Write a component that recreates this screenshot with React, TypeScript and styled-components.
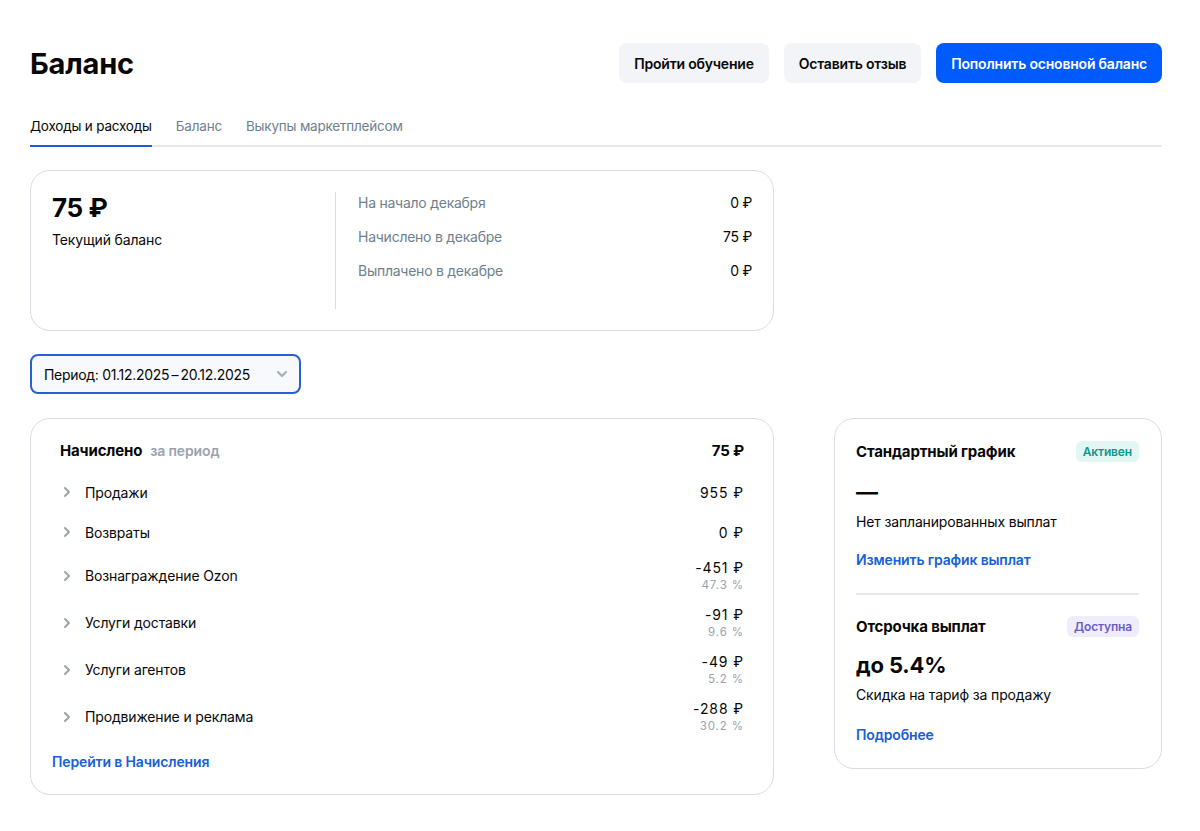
import React from 'react';
import styled, { createGlobalStyle } from 'styled-components';

const Colors = {
  text: '#070707',
  secondary: '#707f8d',
  muted: '#99a3ae',
  border: '#d9dde3',
  line: '#e6e8eb',
  blue: '#005bff',
  link: '#1760d6',
  btnGray: '#f2f4f7',
};

const GlobalStyle = createGlobalStyle`
  body {
    margin: 0;
    background: #fff;
    font-family: Inter, "Noto Sans", Arial, sans-serif;
    color: ${Colors.text};
    letter-spacing: -0.15px;
  }
  * { box-sizing: border-box; }
`;

const Page = styled.div`
  padding: 43px 38px 30px 30px;
  width: 1200px;
`;

const Header = styled.div`
  display: flex;
  align-items: center;
  justify-content: space-between;
`;

const Title = styled.h1`
  margin: 0;
  font-size: 29px;
  font-weight: 700;
  letter-spacing: -0.2px;
`;

const Actions = styled.div`
  display: flex;
  gap: 15px;
`;

const Button = styled.button<{ primary?: boolean }>`
  height: 40px;
  padding: 0 15px;
  border: none;
  border-radius: 8px;
  font-family: inherit;
  font-size: 14px;
  font-weight: 600;
  letter-spacing: -0.2px;
  background: ${({ primary }) => (primary ? Colors.blue : Colors.btnGray)};
  color: ${({ primary }) => (primary ? '#fff' : Colors.text)};
`;

const Tabs = styled.div`
  display: flex;
  gap: 24px;
  margin-top: 25px;
  border-bottom: 2px solid ${Colors.line};
`;

const Tab = styled.div<{ active?: boolean }>`
  padding: 9px 0 10px;
  margin-bottom: -2px;
  font-size: 13.5px;
  line-height: 18px;
  letter-spacing: -0.2px;
  color: ${({ active }) => (active ? Colors.text : Colors.secondary)};
  border-bottom: 2px solid ${({ active }) => (active ? '#1f5bd6' : 'transparent')};
`;

const Card = styled.div`
  border: 1px solid ${Colors.border};
  border-radius: 20px;
  background: #fff;
`;

const BalanceCard = styled(Card)`
  width: 744px;
  margin-top: 23px;
  display: flex;
  padding: 21px;
`;

const BalanceMain = styled.div`
  width: 283px;
`;

const BigAmount = styled.div`
  font-size: 26px;
  font-weight: 700;
  line-height: 32px;
  letter-spacing: -0.4px;
`;

const Caption = styled.div`
  font-size: 14px;
  line-height: 20px;
  margin-top: 6px;
`;

const VDivider = styled.div`
  width: 1px;
  height: 117px;
  background: ${Colors.border};
`;

const Summary = styled.div`
  flex: 1;
  padding-left: 22px;
  display: flex;
  flex-direction: column;
  gap: 12px;
`;

const SummaryRow = styled.div`
  display: flex;
  justify-content: space-between;
  font-size: 14px;
  line-height: 22px;
  letter-spacing: -0.25px;
`;

const SummaryLabel = styled.span`
  color: ${Colors.secondary};
`;

const PeriodSelect = styled.div`
  margin-top: 23px;
  width: 271px;
  height: 40px;
  border: 2px solid #2a5fd2;
  border-radius: 8px;
  background: #f7f9fc;
  display: flex;
  align-items: center;
  justify-content: space-between;
  padding: 0 10px 0 12px;
  font-size: 14px;
  letter-spacing: -0.3px;
`;

const Columns = styled.div`
  display: flex;
  justify-content: space-between;
  align-items: flex-start;
  margin-top: 24px;
`;

const AccrualCard = styled(Card)`
  width: 744px;
  padding: 21px 29px 22px 21px;
`;

const AccrualHeader = styled.div`
  display: flex;
  justify-content: space-between;
  align-items: center;
  padding-left: 8px;
  height: 20px;
  margin-bottom: 12px;
  font-size: 15px;
  font-weight: 700;
`;

const Muted = styled.span`
  color: ${Colors.muted};
  font-size: 14px;
  font-weight: 600;
  margin-left: 8px;
`;

const Row = styled.div`
  display: flex;
  align-items: center;
  justify-content: space-between;
  min-height: 40px;
  padding: 6px 0 6px 10px;
`;

const RowLabel = styled.div`
  display: flex;
  align-items: center;
  gap: 13px;
  font-size: 14px;
`;

const RowValue = styled.div`
  text-align: right;
  font-size: 14px;
  line-height: 19px;
  letter-spacing: 0.9px;
`;

const Percent = styled.div`
  font-size: 11.5px;
  line-height: 16px;
  color: ${Colors.muted};
  letter-spacing: 0.9px;
`;

const Link = styled.a<{ mt?: number }>`
  display: block;
  color: ${Colors.link};
  font-size: 14px;
  font-weight: 600;
  line-height: 20px;
  text-decoration: none;
  margin-top: ${({ mt }) => mt ?? 0}px;
`;

const ScheduleCard = styled(Card)`
  width: 328px;
  padding: 21px 22px 23px 21px;
`;

const ScheduleHead = styled.div<{ mt?: number }>`
  display: flex;
  justify-content: space-between;
  align-items: center;
  height: 22px;
  margin-top: ${({ mt }) => mt ?? 0}px;
  font-size: 15px;
  font-weight: 700;
`;

const Badge = styled.span<{ tone: 'teal' | 'purple' }>`
  padding: 3px 7px;
  border-radius: 6px;
  font-size: 12px;
  font-weight: 600;
  line-height: 15px;
  background: ${({ tone }) => (tone === 'teal' ? '#e2f6f3' : '#efedfb')};
  color: ${({ tone }) => (tone === 'teal' ? '#13958a' : '#6a5cc7')};
`;

const Big = styled.div<{ mt: number }>`
  margin-top: ${({ mt }) => mt}px;
  font-size: 22px;
  font-weight: 700;
  line-height: 28px;
`;

const Text = styled.div<{ mt: number }>`
  margin-top: ${({ mt }) => mt}px;
  font-size: 14px;
  line-height: 20px;
`;

const HDivider = styled.div`
  margin-top: 23px;
  height: 2px;
  background: ${Colors.line};
`;

const Chevron = () => (
  <svg width="10" height="12" viewBox="0 0 10 12" fill="none">
    <path d="M3 2l4 4-4 4" stroke={Colors.muted} strokeWidth="2" strokeLinecap="round" strokeLinejoin="round" />
  </svg>
);

const ChevronDown = () => (
  <svg width="14" height="10" viewBox="0 0 14 10" fill="none">
    <path d="M3 3l4 4 4-4" stroke="#a6aeb8" strokeWidth="2.2" strokeLinecap="round" strokeLinejoin="round" />
  </svg>
);

const accruals = [
  { label: 'Продажи', value: '955 ₽' },
  { label: 'Возвраты', value: '0 ₽' },
  { label: 'Вознаграждение Ozon', value: '-451 ₽', pct: '47.3 %' },
  { label: 'Услуги доставки', value: '-91 ₽', pct: '9.6 %' },
  { label: 'Услуги агентов', value: '-49 ₽', pct: '5.2 %' },
  { label: 'Продвижение и реклама', value: '-288 ₽', pct: '30.2 %' },
];

const summary = [
  ['На начало декабря', '0 ₽'],
  ['Начислено в декабре', '75 ₽'],
  ['Выплачено в декабре', '0 ₽'],
];

export default function App() {
  return (
    <Page>
      <GlobalStyle />
      <Header>
        <Title>Баланс</Title>
        <Actions>
          <Button>Пройти обучение</Button>
          <Button>Оставить отзыв</Button>
          <Button primary>Пополнить основной баланс</Button>
        </Actions>
      </Header>

      <Tabs>
        <Tab active>Доходы и расходы</Tab>
        <Tab>Баланс</Tab>
        <Tab>Выкупы маркетплейсом</Tab>
      </Tabs>

      <BalanceCard>
        <BalanceMain>
          <BigAmount>75 ₽</BigAmount>
          <Caption>Текущий баланс</Caption>
        </BalanceMain>
        <VDivider />
        <Summary>
          {summary.map(([label, value]) => (
            <SummaryRow key={label}>
              <SummaryLabel>{label}</SummaryLabel>
              <span>{value}</span>
            </SummaryRow>
          ))}
        </Summary>
      </BalanceCard>

      <PeriodSelect>
        <span>Период: 01.12.2025{'\u2009–\u2009'}20.12.2025</span>
        <ChevronDown />
      </PeriodSelect>

      <Columns>
        <AccrualCard>
          <AccrualHeader>
            <span>
              Начислено<Muted>за период</Muted>
            </span>
            <span>75 ₽</span>
          </AccrualHeader>
          {accruals.map((item) => (
            <Row key={item.label}>
              <RowLabel>
                <Chevron />
                {item.label}
              </RowLabel>
              <RowValue>
                {item.value}
                {item.pct && <Percent>{item.pct}</Percent>}
              </RowValue>
            </Row>
          ))}
          <Link mt={12}>Перейти в Начисления</Link>
        </AccrualCard>

        <ScheduleCard>
          <ScheduleHead>
            Стандартный график
            <Badge tone="teal">Активен</Badge>
          </ScheduleHead>
          <Big mt={16}>—</Big>
          <Text mt={6}>Нет запланированных выплат</Text>
          <Link mt={18}>Изменить график выплат</Link>
          <HDivider />
          <ScheduleHead mt={20}>
            Отсрочка выплат
            <Badge tone="purple">Доступна</Badge>
          </ScheduleHead>
          <Big mt={14}>до 5.4%</Big>
          <Text mt={6}>Скидка на тариф за продажу</Text>
          <Link mt={20}>Подробнее</Link>
        </ScheduleCard>
      </Columns>
    </Page>
  );
}
